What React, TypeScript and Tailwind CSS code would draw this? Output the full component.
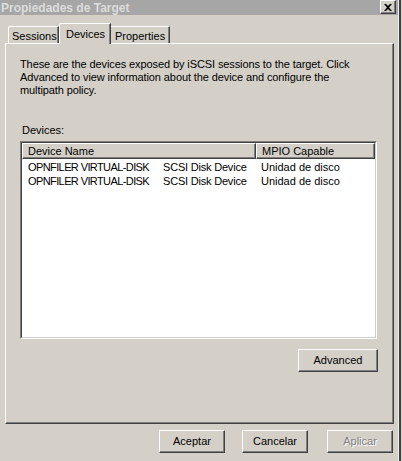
import React from "react";

const font = { fontFamily: '"Liberation Sans", Arial, sans-serif' };

function Btn({ label, w, disabled }: { label: string; w: string; disabled?: boolean }) {
  return (
    <div
      className={`${w} h-[23px] flex items-center justify-center border border-t-white border-l-white border-r-[#404040] border-b-[#404040] shadow-[inset_-1px_-1px_0_#808080] bg-[#d4d0c8] text-[11px] ${
        disabled ? "text-[#808080] [text-shadow:1px_1px_0_#ffffff]" : "text-black"
      }`}
    >
      {label}
    </div>
  );
}

export default function App() {
  return (
    <div className="w-[402px] h-[461px] bg-[#d4d0c8] flex overflow-hidden text-black" style={font}>
      <div className="w-[398px] flex flex-col">
        {/* Title bar */}
        <div className="h-[15px] bg-[#a6a6a6] flex items-center justify-between">
          <span className="text-[12px] font-bold text-[#dcdcdc] pl-[1px] leading-none">Propiedades de Target</span>
          <div className="w-[16px] h-[14px] mr-[2px] self-start bg-[#d4d0c8] border border-t-white border-l-white border-r-[#404040] border-b-[#404040] shadow-[inset_-1px_-1px_0_#808080] flex items-center justify-center">
            <svg width="8" height="7" viewBox="0 0 8 7">
              <path d="M0 0h2l2 2 2-2h2L5 3.5 8 7H6L4 5 2 7H0l3-3.5z" fill="#000" />
            </svg>
          </div>
        </div>

        {/* Tabs */}
        <div className="h-[28px] flex items-end pl-[8px] relative z-10">
          <div className="w-[51px] h-[17px] border-t border-l border-white border-r border-r-[#404040] shadow-[inset_-1px_0_0_#808080] rounded-tl-[2px] text-[11px] flex items-start pl-[3px] pt-[1px]">
            Sessions
          </div>
          <div className="w-[52px] h-[21px] -mb-[1px] bg-[#d4d0c8] border-t border-l border-white border-r border-r-[#404040] shadow-[inset_-1px_0_0_#808080] rounded-tl-[2px] text-[11px] flex items-start pl-[6px] pt-[2px]">
            Devices
          </div>
          <div className="w-[59px] h-[17px] border-t border-white border-r border-r-[#404040] shadow-[inset_-1px_0_0_#808080] text-[11px] flex items-start pl-[4px] pt-[1px]">
            Properties
          </div>
        </div>

        {/* Panel */}
        <div className="ml-[5px] w-[389px] h-[381px] border border-t-white border-l-white border-r-[#404040] border-b-[#404040] shadow-[inset_-1px_-1px_0_#808080] flex flex-col pl-[14px] pr-[15px]">
          <div className="mt-[14px] text-[11px] leading-[13px] tracking-[-0.1px]">
            These are the devices exposed by iSCSI sessions to the target. Click
            <br />
            Advanced to view information about the device and configure the
            <br />
            multipath policy.
          </div>
          <div className="mt-[27px] ml-[2px] text-[11px] leading-[13px]">Devices:</div>
          <div className="mt-[4px] w-[357px] h-[198px] border border-t-[#808080] border-l-[#808080] border-r-white border-b-white">
            <div className="w-full h-full border border-t-[#404040] border-l-[#404040] border-r-[#d4d0c8] border-b-[#d4d0c8] bg-white flex flex-col">
              <div className="flex h-[16px] text-[11px]">
                <div className="w-[234px] border border-t-white border-l-white border-r-[#404040] border-b-[#404040] shadow-[inset_-1px_-1px_0_#808080] bg-[#d4d0c8] pl-[5px] flex items-center">
                  Device Name
                </div>
                <div className="flex-1 border border-t-white border-l-white border-r-[#404040] border-b-[#404040] shadow-[inset_-1px_-1px_0_#808080] bg-[#d4d0c8] pl-[5px] flex items-center">
                  MPIO Capable
                </div>
              </div>
              <div className="h-[1px]" />
              {[0, 1].map((i) => (
                <div key={i} className="flex h-[14px] items-center text-[11px]">
                  <div className="w-[141px] pl-[6px] whitespace-nowrap tracking-[-0.6px]">OPNFILER VIRTUAL-DISK</div>
                  <div className="w-[98px] whitespace-nowrap tracking-[-0.2px]">SCSI Disk Device</div>
                  <div className="whitespace-nowrap">Unidad de disco</div>
                </div>
              ))}
            </div>
          </div>
          <div className="mt-[10px] flex justify-end">
            <Btn label="Advanced" w="w-[80px]" />
          </div>
        </div>

        {/* Bottom buttons */}
        <div className="mt-[6px] flex justify-end gap-[17px] pr-[5px]">
          <Btn label="Aceptar" w="w-[66px]" />
          <Btn label="Cancelar" w="w-[66px]" />
          <div className="ml-[2px]">
            <Btn label="Aplicar" w="w-[66px]" disabled />
          </div>
        </div>
      </div>
      {/* right frame */}
      <div className="w-[4px] h-full flex">
        <div className="w-[1px] bg-[#f0f0f0]" />
        <div className="w-[2px] bg-[#404040]" />
        <div className="w-[1px] bg-[#d4d0c8]" />
      </div>
    </div>
  );
}
